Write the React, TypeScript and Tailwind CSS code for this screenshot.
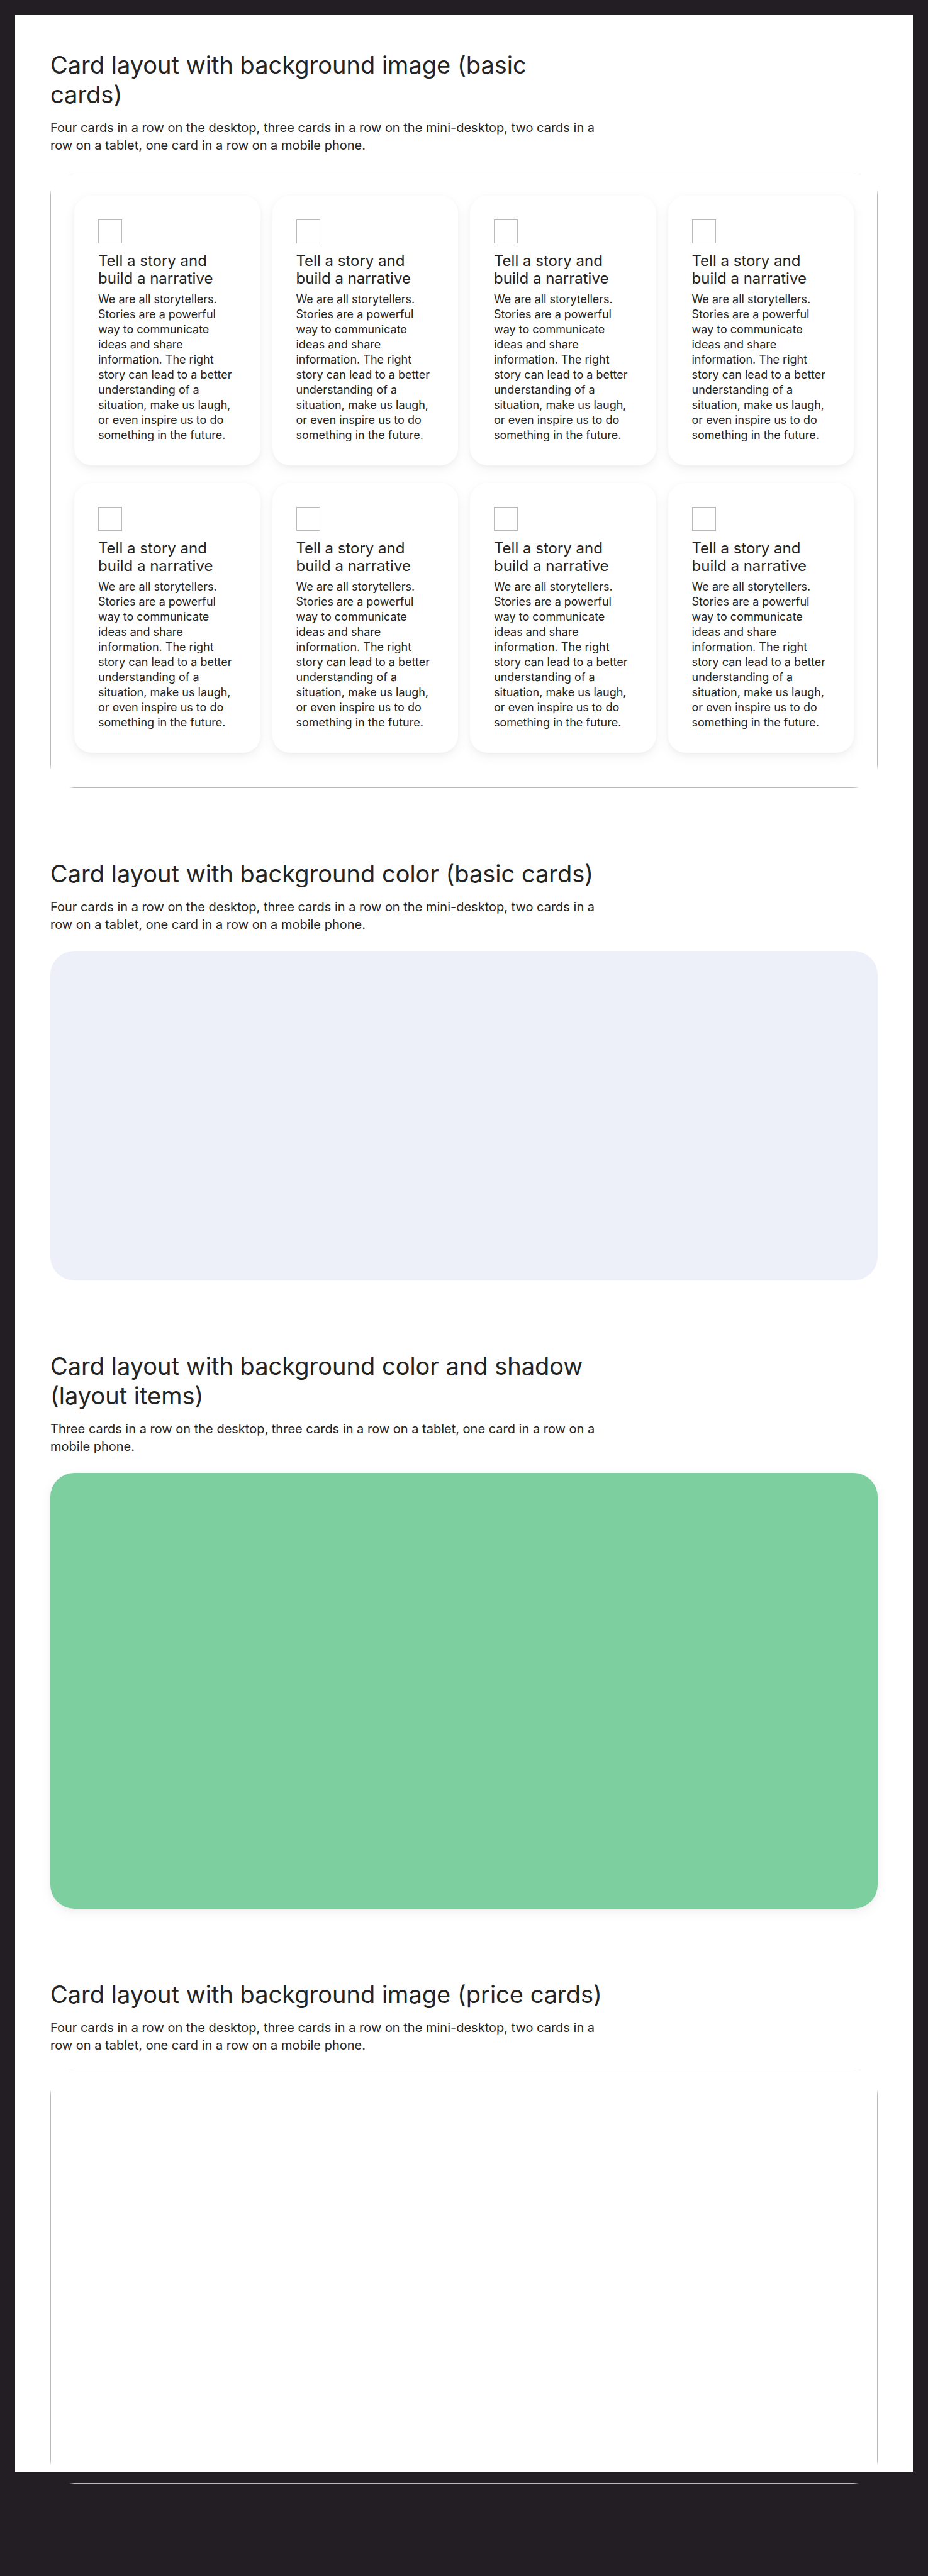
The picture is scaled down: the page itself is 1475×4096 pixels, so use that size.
import type { ReactNode } from "react";

const STORY =
  "We are all storytellers. Stories are a powerful way to communicate ideas and share information. The right story can lead to a better understanding of a situation, make us laugh, or even inspire us to do something in the future.";

const FOUR_CARDS =
  "Four cards in a row on the desktop, three cards in a row on the mini-desktop, two cards in a row on a tablet, one card in a row on a mobile phone.";

const THREE_CARDS =
  "Three cards in a row on the desktop, three cards in a row on a tablet, one card in a row on a mobile phone.";

function SectionHeader({ title, text }: { title: string; text: string }) {
  return (
    <header className="mb-[28px] flex max-w-[880px] flex-col gap-[15px]">
      <h2 className="text-[38px] leading-[47px]">{title}</h2>
      <p className="text-[20px] leading-[28px]">{text}</p>
    </header>
  );
}

/* Rounded frame that clips the thin outline of an empty background image. */
function ImageFrame({ children, className = "" }: { children?: ReactNode; className?: string }) {
  return (
    <div className={`relative overflow-hidden rounded-[38px] ${className}`}>
      <div className="pointer-events-none absolute inset-0 border border-[#bababa]" />
      {children}
    </div>
  );
}

function StoryCard() {
  return (
    <article className="rounded-[28px] bg-white px-[38px] pt-[38px] pb-[36px] shadow-[0_6px_20px_rgba(0,0,0,0.05),0_3px_8px_rgba(0,0,0,0.03)]">
      <div className="size-[38px] border border-[#bababa]" />
      <h3 className="mt-[14px] text-[24px] leading-[28px]">Tell a story and build a narrative</h3>
      <p className="mt-[7px] text-[18px] leading-[24px]">{STORY}</p>
    </article>
  );
}

export default function App() {
  return (
    <div className="min-h-screen bg-[#221e23] p-[24px] font-['Inter',sans-serif] text-[#242424]">
      <main className="flex flex-col gap-[113px] bg-white px-[56px] pt-[56px]">
        <section>
          <SectionHeader title="Card layout with background image (basic cards)" text={FOUR_CARDS} />
          <ImageFrame className="px-[38px] pt-[38px] pb-[56px]">
            <div className="grid grid-cols-4 gap-x-[19px] gap-y-[28px]">
              {Array.from({ length: 8 }, (_, i) => (
                <StoryCard key={i} />
              ))}
            </div>
          </ImageFrame>
        </section>

        <section>
          <SectionHeader title="Card layout with background color (basic cards)" text={FOUR_CARDS} />
          <div className="h-[524px] rounded-[38px] bg-[#edf0f8]" />
        </section>

        <section>
          <SectionHeader title="Card layout with background color and shadow (layout items)" text={THREE_CARDS} />
          <div className="h-[693px] rounded-[38px] bg-[#7dcfa0] shadow-[0_6px_20px_rgba(0,0,0,0.05),0_3px_8px_rgba(0,0,0,0.03)]" />
        </section>

        <section className="-mb-[19px]">
          <SectionHeader title="Card layout with background image (price cards)" text={FOUR_CARDS} />
          <ImageFrame className="h-[655px]" />
        </section>
      </main>
    </div>
  );
}
